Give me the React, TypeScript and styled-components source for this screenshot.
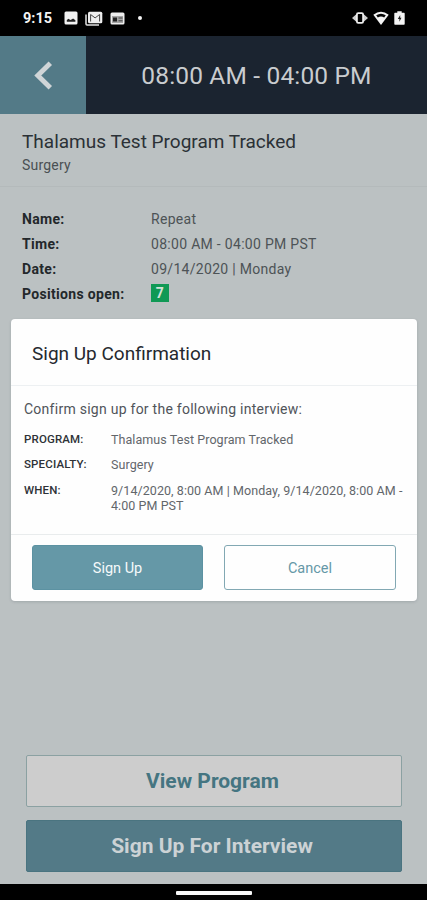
import React from "react";
import styled, { createGlobalStyle, css } from "styled-components";

const GlobalStyle = createGlobalStyle`
  *, *::before, *::after { box-sizing: border-box; }
  html, body { margin: 0; padding: 0; background: #000; }
  body { font-family: Roboto, "Liberation Sans", sans-serif; overflow: hidden; }
  h1, h2, p, dl, dt, dd { margin: 0; font-weight: 400; }
  button { font-family: inherit; padding: 0; cursor: pointer; }
`;

const Screen = styled.div`
  position: relative;
  width: 427px;
  height: 900px;
  display: flex;
  flex-direction: column;
  background: #bbc1c2;
  overflow: hidden;
`;

const StatusBar = styled.div`
  height: 36px;
  flex: none;
  background: #000;
  color: #f4f4f4;
  display: flex;
  align-items: center;
  justify-content: space-between;
  padding: 0 22px 0 23px;
`;

const StatusGroup = styled.div<{ $gap: number }>`
  display: flex;
  align-items: center;
  gap: ${(p) => p.$gap}px;
`;

const Clock = styled.span`
  width: 31px;
  font-size: 14.5px;
  font-weight: 700;
  line-height: 20px;
  margin-right: 3px;
  padding-top: 2px;
`;

const MoreDot = styled.span`
  width: 4px;
  height: 4px;
  border-radius: 50%;
  background: #f4f4f4;
  margin-left: 6px;
`;

const Header = styled.header`
  height: 78px;
  flex: none;
  display: flex;
  background: #1b2430;
`;

const BackButton = styled.button`
  width: 86px;
  border: 0;
  background: #537a87;
  display: flex;
  align-items: center;
  justify-content: center;
`;

const HeaderTitle = styled.h1`
  flex: 1;
  text-align: center;
  font-size: 24.5px;
  letter-spacing: 0.16px;
  line-height: 80px;
  color: #c9cccf;
`;

const ProgramHead = styled.section`
  height: 73px;
  flex: none;
  padding: 15px 22px 0;
  border-bottom: 1px solid #b4babb;
`;

const ProgramName = styled.h2`
  font-size: 19px;
  line-height: 25px;
  color: #2b3136;
`;

const ProgramSpecialty = styled.p`
  font-size: 14px;
  letter-spacing: 0.2px;
  line-height: 22px;
  color: #4a5053;
`;

const Details = styled.dl`
  flex: 1;
  padding: 19px 22px 0;
`;

const DetailRow = styled.div`
  display: grid;
  grid-template-columns: 129px 1fr;
  align-items: center;
  height: 25px;
  font-size: 14px;
`;

const DetailLabel = styled.dt`
  && { font-weight: 700; }
  color: #23282b;
  letter-spacing: 0.32px;
`;

const DetailValue = styled.dd`
  color: #4d5356;
  letter-spacing: 0.3px;
`;

const CountBadge = styled.span`
  display: block;
  width: 18px;
  height: 18px;
  margin-top: -2px;
  background: #109955;
  color: #d4e2d9;
  font-size: 14px;
  font-weight: 700;
  line-height: 19px;
  text-align: center;
`;

const BottomActions = styled.div`
  flex: none;
  display: flex;
  flex-direction: column;
  gap: 13px;
  padding: 0 25px 12px 26px;
`;

const WideButton = styled.button<{ $filled?: boolean }>`
  height: 52px;
  border-radius: 2px;
  font-size: 21px;
  font-weight: 700;
  padding-right: 4px;
  ${(p) =>
    p.$filled
      ? css`
          border: 1px solid #4a7480;
          background: #537a87;
          color: #ccd2d5;
        `
      : css`
          border: 1px solid #8ba1a2;
          background: #cdcdcd;
          color: #457581;
          padding-right: 3px;
        `}
`;

const NavBar = styled.div`
  height: 16px;
  flex: none;
  background: #000;
  display: flex;
  justify-content: center;
  padding-top: 7px;
`;

const NavHandle = styled.div`
  width: 76px;
  height: 4px;
  border-radius: 1px;
  background: #f7f7f7;
`;

const Dialog = styled.div`
  position: absolute;
  left: 11px;
  top: 319px;
  width: 406px;
  height: 281.5px;
  display: flex;
  flex-direction: column;
  border-radius: 4px;
  background: #fefefe;
  box-shadow: 0 1px 3px rgba(60, 75, 80, 0.2);
`;

const DialogTitle = styled.h2`
  height: 67px;
  flex: none;
  padding-left: 21px;
  border-bottom: 1px solid #edf0f2;
  font-size: 19px;
  line-height: 69px;
  color: #25282e;
`;

const DialogBody = styled.div`
  flex: 1;
  padding: 13px 0 0 13px;
`;

const DialogLead = styled.p`
  font-size: 14px;
  letter-spacing: 0.26px;
  line-height: 20px;
  color: #50545a;
  margin-bottom: 13px;
`;

const FactRow = styled.div`
  display: grid;
  grid-template-columns: 87px 1fr;
  min-height: 25.3px;
  line-height: 15px;
`;

const FactLabel = styled.dt`
  && { font-weight: 500; }
  font-size: 11.5px;
  letter-spacing: 0.15px;
  line-height: 14px;
  color: #2e3237;
`;

const FactValue = styled.dd`
  font-size: 12.5px;
  letter-spacing: 0.07px;
  color: #62666b;
  white-space: pre;
`;

const DialogActions = styled.div`
  height: 67px;
  flex: none;
  display: flex;
  gap: 21px;
  padding: 10px 21px 0 21px;
  border-top: 1px solid #e9eced;
`;

const DialogButton = styled.button<{ $primary?: boolean }>`
  flex: ${(p) => (p.$primary ? "0 0 171px" : "1")};
  height: 45px;
  border-radius: 3px;
  border: 1px solid ${(p) => (p.$primary ? "#5c92a2" : "#82a8b3")};
  background: ${(p) => (p.$primary ? "#6598a7" : "#fefefe")};
  color: ${(p) => (p.$primary ? "#f6fafb" : "#6598a7")};
  font-size: 14.5px;
  line-height: 18px;
  padding-top: 3px;
`;

const PhotoIcon = () => (
  <svg width="14" height="14" viewBox="0 0 14 14">
    <rect x="0.5" y="0.5" width="13" height="13" rx="1.5" fill="#f2f2f2" />
    <path d="M2.8 10.8V9l1.7-1.2L6.3 9l1.2-.6 1.6-.8 2.3 1.6v1.6z" fill="#222" />
  </svg>
);

const MailStackIcon = () => (
  <svg width="18" height="15" viewBox="0 0 18 15" fill="none">
    <path d="M1 3.5V13q0 1 1 1h12" stroke="#e2e2e2" strokeWidth="1.5" />
    <rect x="3" y="0.7" width="14.3" height="11.6" rx="1.5" fill="#eee" />
    <path d="M5.6 10.5v-7l4.5 3.4 4.5-3.4v7" stroke="#444" strokeWidth="1" />
  </svg>
);

const NewsIcon = () => (
  <svg width="15" height="13" viewBox="0 0 15 13">
    <rect x="0.5" y="0.5" width="14" height="12" rx="1.5" fill="#ededed" />
    <path d="M2 4h11v7H2z" fill="#a5a5a5" />
    <path d="M3 5.5h4v4H3z" fill="#222" />
    <path d="M8.5 6h4M8.5 8.8h4" stroke="#444" />
  </svg>
);

const VibrateIcon = () => (
  <svg width="16" height="12" viewBox="0 0 16 12">
    <path d="M0 6 4 2.5v7zM16 6l-4-3.5v7z" fill="#cfcfcf" />
    <rect x="4.9" y="1.2" width="6.2" height="9.6" rx="1.3" fill="none" stroke="#eee" strokeWidth="1.8" />
  </svg>
);

const WifiIcon = () => (
  <svg width="16" height="14" viewBox="0 0 16 14">
    <path d="M.3 3.8Q8-2.4 15.7 3.8L8 14z" fill="#f4f4f4" />
    <path d="M3.2 4.3Q8 1 12.8 4.3L11.2 6.5Q8 4.3 4.8 6.5z" fill="#050505" />
  </svg>
);

const BatteryIcon = () => (
  <svg width="11" height="14" viewBox="0 0 11 14">
    <path d="M3.3.3h4.4v1.4H10q.7 0 .7.7v10.6q0 .7-.7.7H1q-.7 0-.7-.7V2.4q0-.7.7-.7h2.3z" fill="#f4f4f4" />
    <path d="M6.2 4 3.8 8.100h1.600v2.700L7.500 6.800H6.200z" fill="#222" />
  </svg>
);

const ChevronIcon = () => (
  <svg width="20" height="30" viewBox="0 0 20 30" fill="none">
    <path d="M17.300 3.300 4.800 15.500l12.500 12.200" stroke="#d0d5d7" strokeWidth="4.900" />
  </svg>
);

const facts = [
  { label: "PROGRAM:", value: "Thalamus Test Program Tracked" },
  { label: "SPECIALTY:", value: "Surgery" },
  { label: "WHEN:", value: "9/14/2020, 8:00 AM | Monday, 9/14/2020, 8:00 AM -\n4:00 PM PST" },
];

const details: { label: string; value: React.ReactNode }[] = [
  { label: "Name:", value: "Repeat" },
  { label: "Time:", value: "08:00 AM - 04:00 PM PST" },
  { label: "Date:", value: "09/14/2020 | Monday" },
  { label: "Positions open:", value: <CountBadge>7</CountBadge> },
];

export default function App() {
  return (
    <>
      <GlobalStyle />
      <Screen>
        <StatusBar>
          <StatusGroup $gap={7}>
            <Clock>9:15</Clock>
            <PhotoIcon />
            <MailStackIcon />
            <NewsIcon />
            <MoreDot />
          </StatusGroup>
          <StatusGroup $gap={5}>
            <VibrateIcon />
            <WifiIcon />
            <BatteryIcon />
          </StatusGroup>
        </StatusBar>
        <Header>
          <BackButton aria-label="Back">
            <ChevronIcon />
          </BackButton>
          <HeaderTitle>08:00 AM - 04:00 PM</HeaderTitle>
        </Header>
        <ProgramHead>
          <ProgramName>Thalamus Test Program Tracked</ProgramName>
          <ProgramSpecialty>Surgery</ProgramSpecialty>
        </ProgramHead>
        <Details>
          {details.map((d) => (
            <DetailRow key={d.label}>
              <DetailLabel>{d.label}</DetailLabel>
              <DetailValue>{d.value}</DetailValue>
            </DetailRow>
          ))}
        </Details>
        <BottomActions>
          <WideButton>View Program</WideButton>
          <WideButton $filled>Sign Up For Interview</WideButton>
        </BottomActions>
        <NavBar>
          <NavHandle />
        </NavBar>
        <Dialog role="dialog" aria-label="Sign Up Confirmation">
          <DialogTitle>Sign Up Confirmation</DialogTitle>
          <DialogBody>
            <DialogLead>Confirm sign up for the following interview:</DialogLead>
            <dl>
              {facts.map((f) => (
                <FactRow key={f.label}>
                  <FactLabel>{f.label}</FactLabel>
                  <FactValue>{f.value}</FactValue>
                </FactRow>
              ))}
            </dl>
          </DialogBody>
          <DialogActions>
            <DialogButton $primary>Sign Up</DialogButton>
            <DialogButton>Cancel</DialogButton>
          </DialogActions>
        </Dialog>
      </Screen>
    </>
  );
}
